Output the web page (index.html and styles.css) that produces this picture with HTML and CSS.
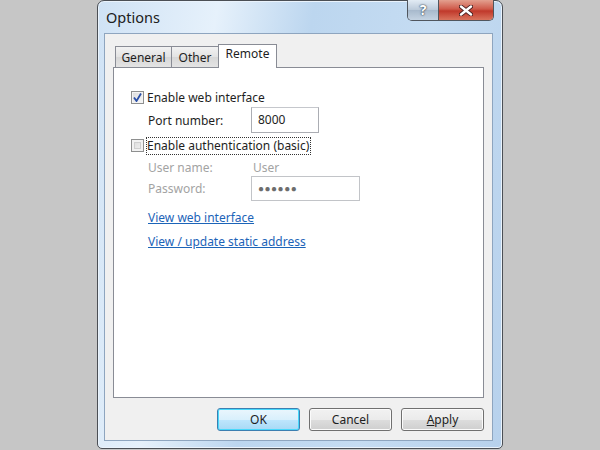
FILE: index.html
```html
<!DOCTYPE html>
<html lang="en">

<head>
    <meta charset="UTF-8">
    <meta name="viewport" content="width=device-width, initial-scale=1.0">
    <title>Options</title>
    <link rel="stylesheet" href="styles.css">
</head>

<body>
    <div class="window">
        <div class="titlebar">
            <span class="title">Options</span>
            <div class="caption-btns">
                <div class="cap-help">?</div>
                <div class="cap-close">
                    <svg width="14" height="11" viewBox="0 0 14 11">
                        <path d="M2 1.5 L12 9.5 M12 1.5 L2 9.5" stroke="#4a2020" stroke-width="4.2" stroke-linecap="round" />
                        <path d="M2 1.5 L12 9.5 M12 1.5 L2 9.5" stroke="#fff" stroke-width="2.4" stroke-linecap="round" />
                    </svg>
                </div>
            </div>
        </div>
        <div class="client">
            <div class="tabs">
                <div class="tab general">General</div>
                <div class="tab other">Other</div>
                <div class="tab active">Remote</div>
            </div>
            <div class="panel">
                <div class="row check-row first">
                    <span class="checkbox">
                        <svg width="9" height="9" viewBox="0 0 9 9">
                            <path d="M1 4.5 L3.5 8 L8 0.5" fill="none" stroke="#2a4fa8" stroke-width="1.8" />
                        </svg>
                    </span>
                    <span>Enable web interface</span>
                </div>
                <div class="row field-row port">
                    <span class="label">Port number:</span>
                    <span class="input small">8000</span>
                </div>
                <div class="row check-row second">
                    <span class="checkbox empty"></span>
                    <span class="focus">Enable authentication (basic)</span>
                </div>
                <div class="row field-row user disabled">
                    <span class="label">User name:</span>
                    <span class="value">User</span>
                </div>
                <div class="row field-row pass disabled">
                    <span class="label">Password:</span>
                    <span class="input wide">&#9679;&#9679;&#9679;&#9679;&#9679;&#9679;</span>
                </div>
                <a class="link first-link" href="#">View web interface</a>
                <a class="link" href="#">View / update static address</a>
            </div>
            <div class="buttons">
                <button class="btn default">OK</button>
                <button class="btn">Cancel</button>
                <button class="btn"><u>A</u>pply</button>
            </div>
        </div>
    </div>
</body>

</html>
```

FILE: styles.css
```css
* {
    margin: 0;
    padding: 0;
    box-sizing: border-box;
}

body {
    width: 600px;
    height: 450px;
    overflow: hidden;
    display: flex;
    justify-content: center;
    background: #c6c6c6;
    font-family: "Noto Sans", "Open Sans", sans-serif;
    font-size: 12px;
    color: #1e1e1e;
}

/* Aero frame */
.window {
    width: 406px;
    height: 449px;
    border: 1px solid #4b4f55;
    border-radius: 7px 7px 5px 5px;
    background: linear-gradient(100deg, #cfe2f5 0%, #e6f1fb 25%, #bcd6ef 45%, #c5dcf2 70%, #b7d1ec 100%);
    box-shadow: inset 0 0 0 1px #eaf3fc;
    padding: 0 9px 7px 6px;
    display: flex;
    flex-direction: column;
}

.titlebar {
    height: 32px;
    display: flex;
    align-items: flex-start;
    justify-content: space-between;
}

.title {
    margin: 6px 0 0 2px;
    font-size: 14.5px;
    color: #202020;
}

.caption-btns {
    display: flex;
    height: 21px;
    margin: -1px -1px 0 0;
    border: 1px solid #50565e;
    border-top: none;
    border-radius: 0 0 5px 5px;
    overflow: hidden;
}

.cap-help {
    width: 31px;
    background: linear-gradient(#e2ebf4, #bac9d9 50%, #a7b9cc 51%, #c4d3e2);
    border-right: 1px solid #50565e;
    text-align: center;
    font-weight: bold;
    font-size: 14px;
    line-height: 19px;
    color: #fff;
    text-shadow: 0 0 2px #2b3a4c, 0 0 1px #2b3a4c;
}

.cap-close {
    width: 54px;
    background: linear-gradient(#e3a08f, #cf5a4a 45%, #c0392b 55%, #d9735d);
    display: flex;
    align-items: center;
    justify-content: center;
}

.client {
    flex: 1;
    background: #f0f0f0;
    border: 1px solid #8ea5bf;
    padding: 9px 8px 9px 8px;
    display: flex;
    flex-direction: column;
}

.tabs {
    display: flex;
    height: 24px;
    align-items: flex-end;
    padding-left: 2px;
    position: relative;
    z-index: 1;
}

.tab {
    height: 21px;
    border: 1px solid #898c95;
    border-bottom: none;
    border-right: none;
    background: linear-gradient(#f2f2f2, #e3e3e3 50%, #d7d7d7 51%, #e4e4e4);
    text-align: center;
    line-height: 22px;
}

.tab.general {
    width: 56px;
}

.tab.other {
    width: 47px;
}

.tab.active {
    width: 59px;
    height: 24px;
    margin-bottom: -1px;
    border-right: 1px solid #898c95;
    background: #fff;
    line-height: 18px;
}

.panel {
    height: 331px;
    background: #fff;
    border: 1px solid #898c95;
    padding: 22px 0 0 17px;
    display: flex;
    flex-direction: column;
    align-items: flex-start;
}

.row {
    display: flex;
    align-items: center;
}

.check-row {
    height: 15px;
}

.checkbox {
    width: 13px;
    height: 13px;
    margin-right: 3px;
    border: 1px solid #8e8f8f;
    background: linear-gradient(135deg, #dcdcdc, #f8f8f8);
    box-shadow: inset 0 0 0 1px #f4f4f4;
    display: flex;
    align-items: center;
    justify-content: center;
}

.checkbox.empty {
    box-shadow: inset 0 0 0 2px #f2f2f2, inset 0 0 0 3px #cfcfcf;
    background: linear-gradient(135deg, #d8d8d8, #f4f4f4);
}

.field-row {
    padding-left: 17px;
}

.label {
    width: 103px;
}

.port {
    margin-top: 2px;
    height: 26px;
}

.second {
    margin-top: 5px;
}

.focus {
    outline: 1px dotted #333;
    padding-right: 1px;
    line-height: 16px;
}

.disabled {
    color: #a3a3a3;
}

.user {
    margin-top: 5px;
    height: 18px;
}

.user .value {
    padding-left: 2px;
}

.pass {
    margin-top: 0;
    height: 25px;
}

.input {
    height: 26px;
    border: 1px solid #abadb3;
    border-top-color: #c5c7cc;
    background: #fff;
    padding-left: 6px;
    line-height: 24px;
    color: #1e1e1e;
}

.input.small {
    width: 68px;
}

.input.wide {
    width: 109px;
    height: 25px;
    border-color: #c2c4c8;
    color: #6d6d6d;
    font-size: 10px;
    letter-spacing: 0.5px;
    line-height: 23px;
}

.link {
    margin-left: 17px;
    color: #1c64b8;
    text-decoration: underline;
    line-height: 16px;
}

.first-link {
    margin-top: 9px;
}

.first-link + .link {
    margin-top: 8px;
}

.buttons {
    display: flex;
    justify-content: flex-end;
    gap: 9px;
    margin-top: 10px;
}

.btn {
    width: 83px;
    height: 23px;
    border: 1px solid #707070;
    border-radius: 3px;
    background: linear-gradient(#f2f2f2, #ebebeb 50%, #dddddd 51%, #cfcfcf);
    box-shadow: inset 0 0 0 1px #fbfbfb;
    font-family: inherit;
    font-size: 12px;
    color: #1e1e1e;
}

.btn u {
    text-decoration: underline;
}

.btn.default {
    border-color: #3c7fb1;
    box-shadow: inset 0 0 0 1px #48d8fb;
    background: linear-gradient(#eaf6fd, #d9f0fc 50%, #bee6fd 51%, #a7d9f5);
}
```
